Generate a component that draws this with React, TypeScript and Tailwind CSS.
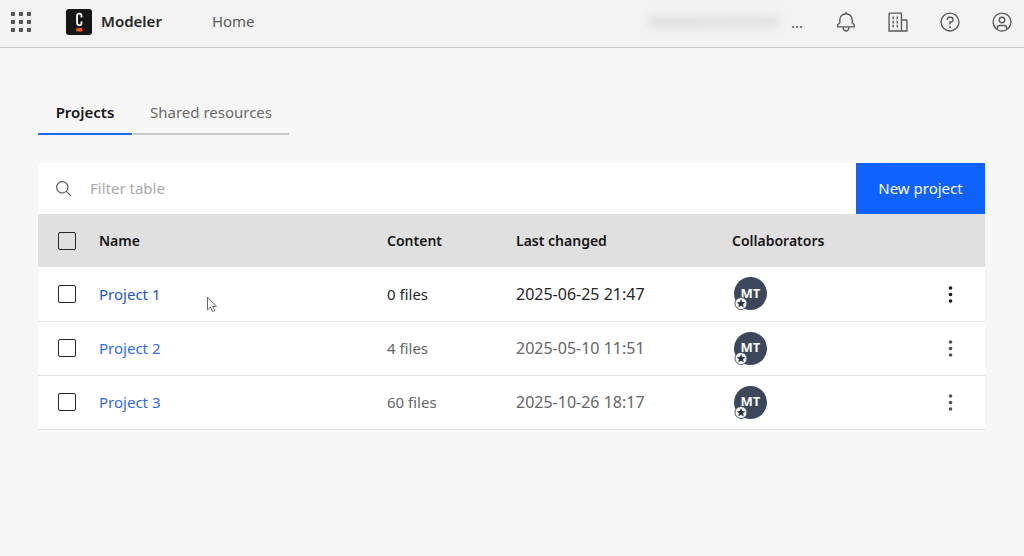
import type { ReactNode } from "react";

type Project = {
  name: string;
  content: string;
  changed: string;
  hovered?: boolean;
};

const projects: Project[] = [
  { name: "Project 1", content: "0 files", changed: "2025-06-25 21:47", hovered: true },
  { name: "Project 2", content: "4 files", changed: "2025-05-10 11:51" },
  { name: "Project 3", content: "60 files", changed: "2025-10-26 18:17" },
];

function Icon({ children, className }: { children: ReactNode; className: string }) {
  return (
    <svg viewBox="0 0 32 32" fill="currentColor" aria-hidden="true" className={className}>
      {children}
    </svg>
  );
}

function HeaderButton({ label, children }: { label: string; children: ReactNode }) {
  return (
    <button type="button" aria-label={label} className="flex text-[#5a5a5a]">
      <Icon className="size-[22px]">{children}</Icon>
    </button>
  );
}

function AppSwitcher() {
  return (
    <button type="button" aria-label="Switch application" className="flex text-[#525252]">
      <svg viewBox="0 0 20 20" fill="currentColor" className="size-5" aria-hidden="true">
        {[0, 8, 16].map((y) =>
          [0, 8, 16].map((x) => (
            <rect key={`${x}-${y}`} x={x} y={y} width="4" height="4" rx="0.8" />
          )),
        )}
      </svg>
    </button>
  );
}

function Logo() {
  return (
    <svg viewBox="0 0 26 26" className="size-[26px]" aria-hidden="true">
      <rect width="26" height="26" rx="3" fill="#161616" />
      <path
        d="M15.5 8.4V6.9a2.2 2.2 0 0 0-4.4 0v7.2a2.2 2.2 0 0 0 4.4 0v-1.5"
        fill="none"
        stroke="#fff"
        strokeWidth="1.8"
      />
      <rect x="10.3" y="19.2" width="6" height="3.2" fill="#fc5d0d" />
    </svg>
  );
}

function Header() {
  return (
    <header className="flex h-12 items-center border-b border-[#cacaca] bg-[#f3f3f3] pr-[11px] pb-1 pl-[11px]">
      <AppSwitcher />
      <a href="#modeler" className="ml-[35px] flex items-center gap-[9px] font-semibold text-[#262626]">
        <Logo />
        Modeler
      </a>
      <nav className="ml-[50px]">
        <a href="#home" className="text-[#5a5a5a]">
          Home
        </a>
      </nav>
      <div className="ml-auto flex items-center gap-7">
        <div className="flex items-center gap-3 text-[#525252]">
          <div className="h-3 w-[130px] bg-linear-to-r from-[#dedede] to-[#e2e2e2] blur-[5px]" />
          <span className="w-4 leading-6">...</span>
        </div>
        <div className="flex items-center gap-[30px]">
          <HeaderButton label="Notifications">
            <path d="M28.7071,19.293L26,16.5859V13a10.0136,10.0136,0,0,0-9-9.9492V1H15V3.0508A10.0136,10.0136,0,0,0,6,13v3.5859L3.2929,19.293A1,1,0,0,0,3,20v3a1,1,0,0,0,1,1h7v.7768a5.152,5.152,0,0,0,4.5,5.1987A5.0057,5.0057,0,0,0,21,25V24h7a1,1,0,0,0,1-1V20A1,1,0,0,0,28.7071,19.293ZM19,25a3,3,0,0,1-6,0V24h6Zm8-3H5V20.4141L7.707,17.707A1,1,0,0,0,8,17V13a8,8,0,0,1,16,0v4a1,1,0,0,0,.293.707L27,20.4141Z" />
          </HeaderButton>
          <HeaderButton label="Organization">
            <path d="M8 8h2v4H8zM8 14h2v4H8zM14 8h2v4h-2zM14 14h2v4h-2zM8 20h2v4H8zM14 20h2v4h-2z" />
            <path d="M30,14a2,2,0,0,0-2-2H22V4a2,2,0,0,0-2-2H4A2,2,0,0,0,2,4V30H30ZM4,4H20V28H4ZM22,28V14h6V28Z" />
          </HeaderButton>
          <HeaderButton label="Help">
            <path d="M16,2A14,14,0,1,0,30,16,14,14,0,0,0,16,2Zm0,26A12,12,0,1,1,28,16,12,12,0,0,1,16,28Z" />
            <circle cx="16" cy="23.5" r="1.5" />
            <path d="M17,8H15.5A4.49,4.49,0,0,0,11,12.5V13h2v-.5A2.5,2.5,0,0,1,15.5,10H17a2.5,2.5,0,0,1,0,5H15v4.5h2V17a4.5,4.5,0,0,0,0-9Z" />
          </HeaderButton>
          <HeaderButton label="Profile">
            <path d="M16,8a5,5,0,1,0,5,5A5,5,0,0,0,16,8Zm0,8a3,3,0,1,1,3-3A3.0034,3.0034,0,0,1,16,16Z" />
            <path d="M16,2A14,14,0,1,0,30,16,14.0158,14.0158,0,0,0,16,2ZM10,26.3765V25a3.0033,3.0033,0,0,1,3-3h6a3.0033,3.0033,0,0,1,3,3v1.3765a11.8989,11.8989,0,0,1-12,0Zm13.9925-1.4507A5.0016,5.0016,0,0,0,19,20H13a5.0016,5.0016,0,0,0-4.9925,4.9258,12,12,0,1,1,15.985,0Z" />
          </HeaderButton>
        </div>
      </div>
    </header>
  );
}

function Tabs() {
  return (
    <div role="tablist" className="flex gap-px">
      <button
        type="button"
        role="tab"
        aria-selected="true"
        className="h-[43px] w-[94px] border-b-2 border-[#1c69f0] text-center font-semibold text-[#161616]"
      >
        Projects
      </button>
      <button
        type="button"
        role="tab"
        aria-selected="false"
        className="h-[43px] w-[156px] border-b-2 border-[#c6c6c6] text-center text-[#6a6a6a]"
      >
        Shared resources
      </button>
    </div>
  );
}

function Toolbar() {
  return (
    <div className="flex h-[51px] bg-white">
      <label className="flex flex-1 items-center gap-[17px] pl-[17px] text-[#5a5a5a]">
        <Icon className="size-[18px]">
          <path d="M29,27.5859l-7.5521-7.5521a11.0177,11.0177,0,1,0-1.4141,1.4141L27.5859,29ZM4,13a9,9,0,1,1,9,9A9.01,9.01,0,0,1,4,13Z" />
        </Icon>
        <input
          type="text"
          aria-label="Filter table"
          placeholder="Filter table"
          className="flex-1 bg-transparent outline-none placeholder:text-[#aaaaaa]"
        />
      </label>
      <button type="button" className="w-[129px] bg-[#0f62fe] text-center text-white">
        New project
      </button>
    </div>
  );
}

function Checkbox({ label }: { label: string }) {
  return (
    <input
      type="checkbox"
      aria-label={label}
      className="block size-[18px] appearance-none rounded-xs border border-[#262626]"
    />
  );
}

function Avatar() {
  return (
    <div className="relative ml-0.5 flex size-[33px] items-center justify-center rounded-full bg-[#3c475c] text-[13px] font-bold text-white">
      MT
      <svg viewBox="0 0 14 14" className="absolute bottom-0 left-0 size-[14px]" aria-hidden="true">
        <circle cx="7" cy="7.5" r="6" fill="#fff" stroke="#3c475c" strokeWidth="0.9" />
        <path
          d="M7 3.1l1.3 2.8 3.1.35-2.3 2.1.65 3.05L7 9.85 4.25 11.4l.65-3.05-2.3-2.1 3.1-.35z"
          fill="#2c374c"
        />
      </svg>
    </div>
  );
}

function ProjectRow({ project }: { project: Project }) {
  return (
    <tr
      className={
        project.hovered
          ? "h-[54px] border-b border-[#e2e2e2] text-[#262626]"
          : "h-[54px] border-b border-[#e2e2e2] text-[#666666]"
      }
    >
      <td className="pl-[20px]">
        <Checkbox label={`Select ${project.name}`} />
      </td>
      <td>
        <a href="#project" className={project.hovered ? "text-[#2058c8]" : "text-[#2f6bec]"}>
          {project.name}
        </a>
      </td>
      <td>{project.content}</td>
      <td className="text-base">{project.changed}</td>
      <td>
        <Avatar />
      </td>
      <td className="pr-[26px]">
        <button
          type="button"
          aria-label={`Actions for ${project.name}`}
          className={project.hovered ? "ml-auto flex text-[#161616]" : "ml-auto flex text-[#525252]"}
        >
          <svg viewBox="0 0 18 18" fill="currentColor" className="size-[18px]" aria-hidden="true">
            <circle cx="9.5" cy="3" r="1.8" />
            <circle cx="9.5" cy="9.5" r="1.8" />
            <circle cx="9.5" cy="16" r="1.8" />
          </svg>
        </button>
      </td>
    </tr>
  );
}

function ProjectTable() {
  return (
    <table className="w-full table-fixed border-collapse bg-white text-left">
      <colgroup>
        <col className="w-[61px]" />
        <col />
        <col className="w-[129px]" />
        <col className="w-[216px]" />
        <col className="w-[184px]" />
        <col className="w-[69px]" />
      </colgroup>
      <thead className="bg-[#e0e0e0] text-sm text-[#161616]">
        <tr className="h-[53px]">
          <th className="pl-[20px]">
            <Checkbox label="Select all projects" />
          </th>
          <th className="font-semibold">Name</th>
          <th className="font-semibold">Content</th>
          <th className="font-semibold">Last changed</th>
          <th className="font-semibold">Collaborators</th>
          <th aria-label="Actions" />
        </tr>
      </thead>
      <tbody>
        {projects.map((project) => (
          <ProjectRow key={project.name} project={project} />
        ))}
      </tbody>
    </table>
  );
}

function Pointer() {
  return (
    <svg viewBox="0 0 12 17" className="pointer-events-none absolute top-[296px] left-[206px] h-[17px] w-3" aria-hidden="true">
      <path
        d="M1.5 1.2v12.6l3-2.7 2 4.4 2.2-1-2-4.2h3.8z"
        fill="#fff"
        stroke="#555"
        strokeWidth="0.9"
      />
    </svg>
  );
}

export default function App() {
  return (
    <div className="relative min-h-screen bg-[#f7f7f7] font-['Noto_Sans',sans-serif] text-[15px]">
      <Header />
      <main className="pt-11 pr-[39px] pl-[38px]">
        <Tabs />
        <section className="mt-7">
          <Toolbar />
          <ProjectTable />
        </section>
      </main>
      <Pointer />
    </div>
  );
}
